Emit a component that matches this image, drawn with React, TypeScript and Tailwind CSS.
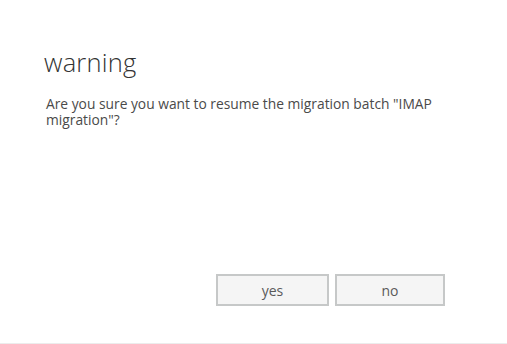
export default function App() {
  return (
    <div className="w-[507px] h-[344px] bg-white flex flex-col border-b border-[#ececec] font-['Segoe_UI','Open_Sans',sans-serif] text-[#333]">
      <div className="pl-[44px] pr-[40px] pt-[46px] flex-1">
        <h1 className="text-[25.5px] font-light leading-[32px] text-[#333] tracking-[0.2px]">warning</h1>
        <p className="mt-[18px] text-[13.8px] leading-[16px] text-[#4a4a4a] pl-[2px]">
          Are you sure you want to resume the migration batch "IMAP migration"?
        </p>
      </div>
      <div className="flex justify-end gap-[6px] pr-[62px] pb-[37px]">
        <button className="w-[113px] h-[32px] border-2 border-[#c6c8c8] bg-[#f5f5f5] text-[14px] text-[#5a5a5a]">yes</button>
        <button className="w-[110px] h-[32px] border-2 border-[#c6c8c8] bg-[#f5f5f5] text-[14px] text-[#5a5a5a]">no</button>
      </div>
    </div>
  );
}
